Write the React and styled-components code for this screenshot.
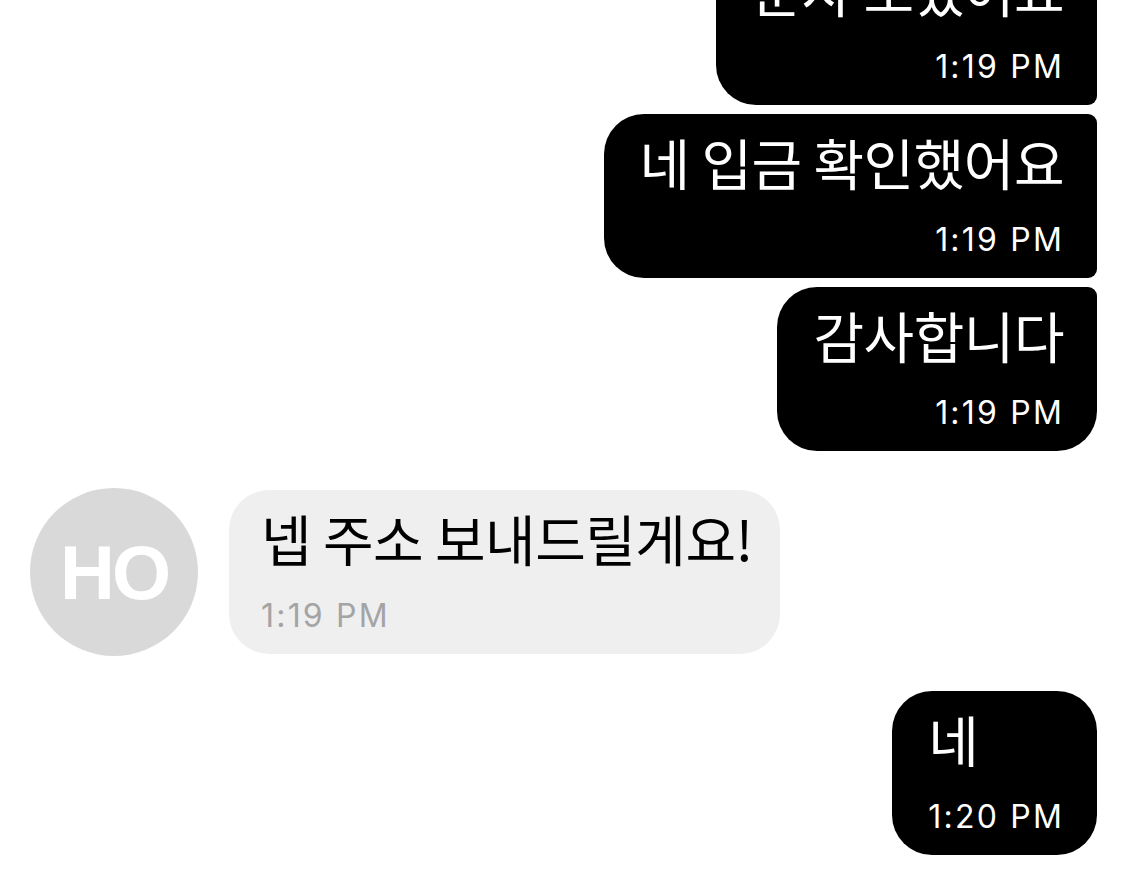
import React from 'react';
import styled, { createGlobalStyle } from 'styled-components';

const GlobalStyle = createGlobalStyle`
  html, body {
    margin: 0;
    padding: 0;
    background: #ffffff;
  }
`;

const ChatView = styled.div`
  height: 870px;
  overflow: hidden;
  display: flex;
  flex-direction: column;
  justify-content: flex-end;
  padding: 0 28px 15px 30px;
  box-sizing: border-box;
  font-family: "Noto Sans CJK KR", "Noto Sans", sans-serif;
`;

const Group = styled.div`
  display: flex;
  flex-direction: column;
  align-items: flex-end;
  gap: 9px;
  margin-top: ${(p) => p.$gap || 0}px;
`;

const IncomingRow = styled.div`
  display: flex;
  align-items: center;
  gap: 31px;
  margin-top: ${(p) => p.$gap || 0}px;
`;

const Avatar = styled.div`
  width: 168px;
  height: 168px;
  border-radius: 50%;
  background: #d9d9d9;
  color: #ffffff;
  display: flex;
  align-items: center;
  justify-content: center;
  font-family: "Liberation Sans", Arial, sans-serif;
  font-weight: 700;
  font-size: 76px;
  letter-spacing: -3px;
  flex-shrink: 0;
`;

const Bubble = styled.div`
  display: flex;
  flex-direction: column;
  padding: 16px ${(p) => (p.$mine ? 33 : 27)}px 16px ${(p) => (p.$mine ? 36 : 32)}px;
  background: ${(p) => (p.$mine ? '#000000' : '#efefef')};
  color: ${(p) => (p.$mine ? '#ffffff' : '#000000')};
  align-items: ${(p) => (p.$mine ? 'flex-end' : 'flex-start')};
  border-radius: ${(p) => p.$radius || '40px'};
`;

const Text = styled.div`
  align-self: flex-start;
  font-size: 55px;
  line-height: 62px;
  letter-spacing: -0.5px;
  white-space: nowrap;
`;

const Time = styled.div`
  margin-top: 26px;
  font-family: Inter, "Liberation Sans", sans-serif;
  font-size: 32px;
  line-height: 44px;
  letter-spacing: 2.2px;
  color: ${(p) => (p.$mine ? '#ffffff' : '#a4a4a4')};
  white-space: nowrap;
`;

export default function App() {
  return (
    <>
      <GlobalStyle />
      <ChatView>
        <Group>
          <Bubble $mine $radius="40px 40px 9px 40px">
            <Text>문자 보냈어요</Text>
            <Time $mine>1:19 PM</Time>
          </Bubble>
          <Bubble $mine $radius="40px 9px 9px 40px">
            <Text>네 입금 확인했어요</Text>
            <Time $mine>1:19 PM</Time>
          </Bubble>
          <Bubble $mine $radius="40px 9px 40px 40px">
            <Text>감사합니다</Text>
            <Time $mine>1:19 PM</Time>
          </Bubble>
        </Group>

        <IncomingRow $gap={37}>
          <Avatar>HO</Avatar>
          <Bubble $radius="40px">
            <Text>넵 주소 보내드릴게요!</Text>
            <Time>1:19 PM</Time>
          </Bubble>
        </IncomingRow>

        <Group $gap={35}>
          <Bubble $mine $radius="40px">
            <Text>네</Text>
            <Time $mine>1:20 PM</Time>
          </Bubble>
        </Group>
      </ChatView>
    </>
  );
}
